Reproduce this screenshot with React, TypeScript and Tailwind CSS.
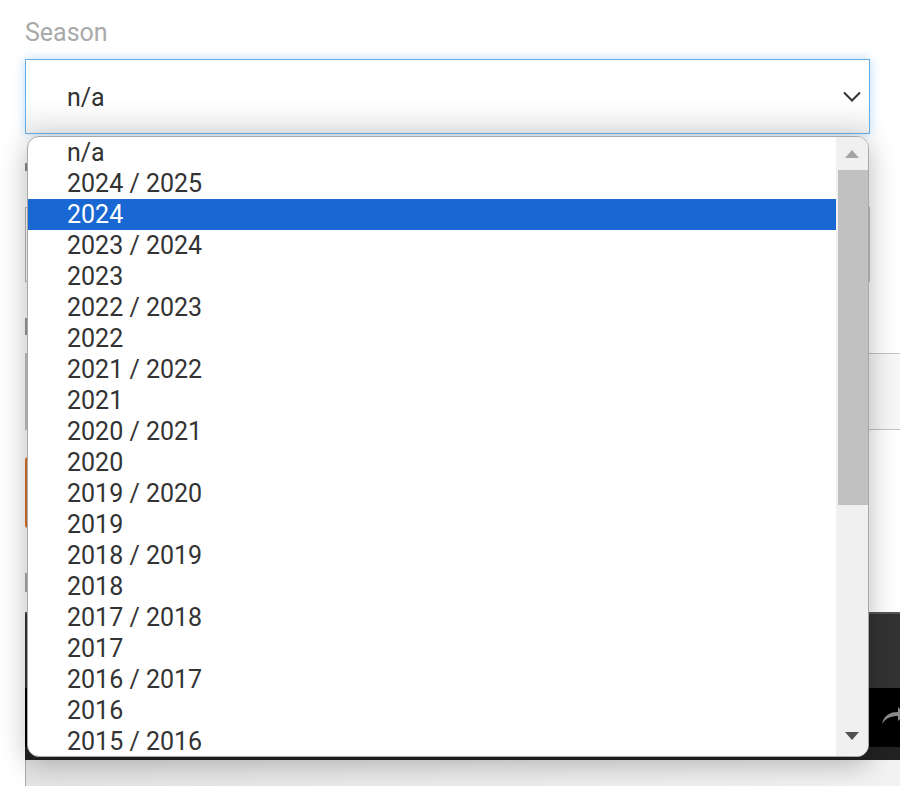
import React from "react";

const seasons = [
  "n/a",
  "2024 / 2025",
  "2024",
  "2023 / 2024",
  "2023",
  "2022 / 2023",
  "2022",
  "2021 / 2022",
  "2021",
  "2020 / 2021",
  "2020",
  "2019 / 2020",
  "2019",
  "2018 / 2019",
  "2018",
  "2017 / 2018",
  "2017",
  "2016 / 2017",
  "2016",
  "2015 / 2016",
];

const SeasonDropdown: React.FC<{ selected: string }> = ({ selected }) => {
  return (
    <div className="absolute left-[27px] top-[136px] flex h-[621px] w-[842px] overflow-hidden rounded-[12px] border border-[#a8a8a8] bg-white shadow-[0_6px_28px_rgba(0,0,0,0.28)]">
      {/* Options */}
      <div className="flex-1 overflow-hidden">
        {seasons.map(s => (
          <div
            key={s}
            className={`h-[31px] pl-[39px] text-[25px] leading-[31px] ${
              s === selected ? "bg-[#1967d2] text-white" : "text-[#333]"
            }`}
          >
            {s}
          </div>
        ))}
      </div>

      {/* Scrollbar */}
      <div className="flex w-[32px] flex-col bg-[#f0f0f0]">
        <div className="flex h-[33px] items-center justify-center">
          <svg width="14" height="8" viewBox="0 0 14 8">
            <polygon points="7,0 14,8 0,8" fill="#a3a3a3" />
          </svg>
        </div>
        <div className="ml-[2px] h-[335px] w-[30px] bg-[#c1c1c1]" />
        <div className="flex-1" />
        <div className="flex h-[36px] items-center justify-center pb-[4px]">
          <svg width="14" height="8" viewBox="0 0 14 8">
            <polygon points="0,0 14,0 7,8" fill="#505050" />
          </svg>
        </div>
      </div>
    </div>
  );
};

export default function App() {
  return (
    <div className="relative h-[786px] w-[900px] overflow-hidden bg-white font-['Roboto',sans-serif]">
      <div className="pl-[25px] pr-[30px] pt-[18px]">
        {/* Season field */}
        <label className="block h-[30px] text-[25px] leading-[30px] text-[#a9a9a9]">Season</label>
        <div className="mt-[11px] flex h-[75px] items-center justify-between border border-[#66afe9] bg-gradient-to-b from-white from-55% to-[#eeeeee] pl-[41px] pr-[8px] shadow-[0_0_10px_rgba(102,175,233,0.45)]">
          <span className="pt-[2px] text-[25px] text-[#333]">n/a</span>
          <svg width="18" height="11" viewBox="0 0 18 11" fill="none">
            <polyline points="1,1.5 9,9.5 17,1.5" stroke="#333" strokeWidth="2" />
          </svg>
        </div>

        {/* Fields hidden behind the open list */}
        <div className="mt-[29px] h-[8px] w-[60px] bg-[#888]" />
        <div className="mt-[36px] h-[75px] border border-[#bbb] bg-white" />
        <div className="mt-[36px] h-[17px] w-[120px] bg-[#999]" />
        <div className="-mr-[30px] mt-[18px] h-[77px] border-y border-l-2 border-[#c4c4c4] bg-[#f7f7f7]" />
        <div className="mt-[27px] h-[71px] w-[200px] rounded-[3px] bg-[#dd7426]" />
        <div className="mt-[45px] h-[19px] w-[160px] border-l-2 border-[#aaa]" />

        {/* Video player */}
        <div className="-mr-[30px] mt-[20px] flex h-[148px] flex-col">
          <div className="h-[2px] bg-[#555]" />
          <div className="h-[74px] bg-[#333]" />
          <div className="relative h-[59px] bg-black">
            <svg className="absolute right-[-6px] top-[16px]" width="26" height="22" viewBox="0 0 26 22" fill="none">
              <path d="M2 20 C4 11 10 8 18 8 L18 3 L25 10 L18 17 L18 12 C11 12 6 14 2 20 Z" fill="#8a8a8a" />
            </svg>
          </div>
          <div className="h-[13px] bg-[#222]" />
        </div>
        <div className="-mr-[30px] h-[40px] border-l border-[#aaa] bg-gradient-to-r from-[#e4e4e4] via-[#ececec] to-[#f2f2f2]" />
      </div>

      <SeasonDropdown selected="2024" />
    </div>
  );
}
